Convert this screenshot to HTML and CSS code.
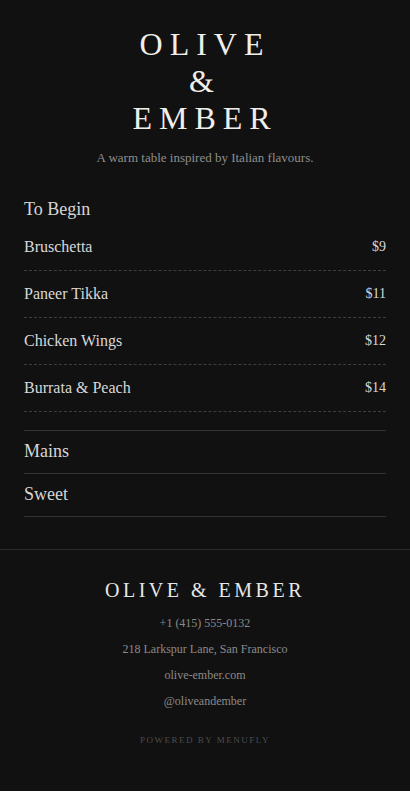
FILE: index.html
```html
<!DOCTYPE html>
<html lang="en">
<head>
<meta charset="utf-8">
<title>Olive &amp; Ember</title>
<link rel="stylesheet" href="styles.css">
</head>
<body>
<div class="page">
  <header class="hero">
    <h1 class="brand"><span>OLIVE</span><span>&amp;</span><span>EMBER</span></h1>
    <p class="tagline">A warm table inspired by Italian flavours.</p>
  </header>

  <main class="menu">
    <section class="category open">
      <h2 class="category-title">To Begin</h2>
      <ul class="items">
        <li class="item"><span class="name">Bruschetta</span><span class="price">$9</span></li>
        <li class="item"><span class="name">Paneer Tikka</span><span class="price">$11</span></li>
        <li class="item"><span class="name">Chicken Wings</span><span class="price">$12</span></li>
        <li class="item"><span class="name">Burrata &amp; Peach</span><span class="price">$14</span></li>
      </ul>
    </section>
    <section class="category">
      <h2 class="category-title">Mains</h2>
    </section>
    <section class="category">
      <h2 class="category-title">Sweet</h2>
    </section>
  </main>

  <footer class="footer">
    <div class="footer-brand">OLIVE &amp; EMBER</div>
    <ul class="contact">
      <li>+1 (415) 555-0132</li>
      <li>218 Larkspur Lane, San Francisco</li>
      <li>olive-ember.com</li>
      <li>@oliveandember</li>
    </ul>
    <div class="powered">POWERED BY MENUFLY</div>
  </footer>
</div>
</body>
</html>
```

FILE: styles.css
```css
html {
  background: #ffffff;
}
body {
  margin: 0;
  font-family: "Liberation Serif", "Times New Roman", serif;
}
.page {
  background: #111111;
  color: #dcdcdc;
  padding-bottom: 44px;
}
.hero {
  padding-top: 26px;
  text-align: center;
}
.brand {
  margin: 0;
  font-weight: 400;
  font-size: 32px;
  line-height: 37px;
  letter-spacing: 7px;
  color: #f0eeea;
  display: flex;
  flex-direction: column;
  align-items: center;
}
.tagline {
  margin: 11px 0 0;
  font-size: 13px;
  line-height: 20px;
  color: #8e8e8e;
}
.menu {
  padding: 29px 24px 0;
}
.category {
  border-bottom: 1px solid #333333;
}
.category-title {
  margin: 0;
  font-weight: 400;
  font-size: 18px;
  line-height: 24px;
  padding: 8px 0 10px;
  color: #d6d6d6;
}
.category.open {
  padding-bottom: 18px;
}
.category.open .category-title {
  padding: 0;
  margin-bottom: 3px;
}
.items {
  list-style: none;
  margin: 0;
  padding: 0;
}
.item {
  display: flex;
  justify-content: space-between;
  align-items: center;
  padding: 12px 0;
  font-size: 16px;
  line-height: 22px;
  height: 22px;
  border-bottom: 1px dashed #3e3e3e;
  color: #d8d8d8;
}
.price {
  font-size: 14px;
}
.footer {
  margin-top: 32px;
  border-top: 1px solid #2c2c2c;
  padding-top: 26px;
  text-align: center;
}
.footer-brand {
  font-size: 20px;
  line-height: 28px;
  letter-spacing: 3.5px;
  color: #e6e6e6;
}
.contact {
  list-style: none;
  margin: 6px 0 0;
  padding: 0;
  font-size: 12px;
  line-height: 26px;
  color: #8a8a8a;
}
.powered {
  margin-top: 19px;
  font-size: 9px;
  line-height: 14px;
  letter-spacing: 1.5px;
  color: #4c4c4c;
}
```
